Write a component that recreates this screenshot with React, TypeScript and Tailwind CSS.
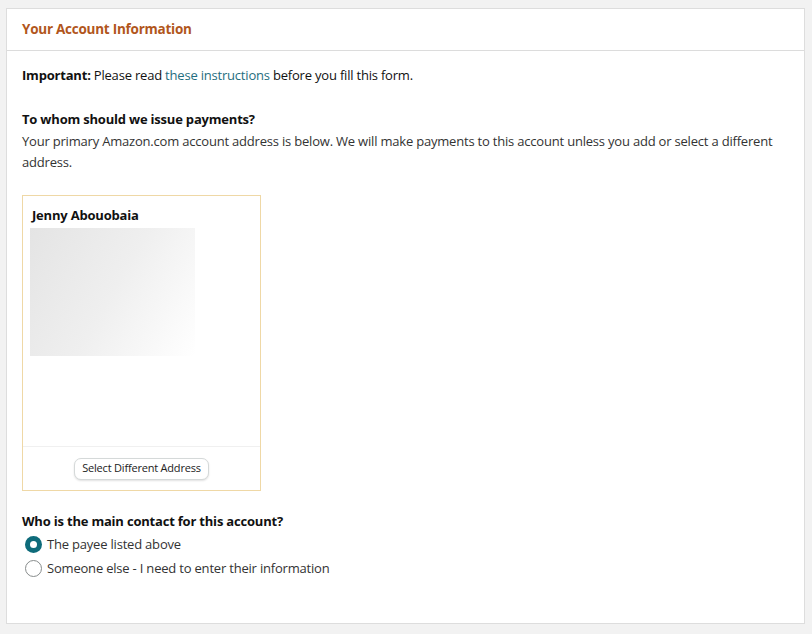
import React, { useState } from 'react';

const App: React.FC = () => {
  const [contact, setContact] = useState<'payee' | 'other'>('payee');

  return (
    <div className="min-h-[634px] w-full bg-[#f2f2f2] pt-2 pl-[6px] pr-[7px] text-[13px] tracking-[-0.2px] text-[#111] font-['Open_Sans','Noto_Sans',sans-serif]">
      <div className="h-[616px] border border-[#dddddd] bg-white">
        {/* header */}
        <div className="h-[42px] border-b border-[#dcdcdc] flex items-center px-[15px]">
          <h2 className="text-[13.5px] tracking-[-0.25px] font-bold text-[#b1561c] -mt-[1px]">Your Account Information</h2>
        </div>

        <div className="px-[15px] pt-[14px]">
          <p className="leading-[20px]">
            <span className="font-bold">Important:</span> Please read{' '}
            <a href="#" className="text-[#1f6e80]">these instructions</a> before you fill this form.
          </p>

          <h3 className="mt-[24px] font-bold leading-[20px]">To whom should we issue payments?</h3>
          <p className="mt-[2px] leading-[21px] text-[#333]">
            Your primary Amazon.com account address is below. We will make payments to this account unless you add or select a different address.
          </p>

          {/* address card */}
          <div className="mt-[22px] w-[239px] h-[296px] border border-[#efd8a6] flex flex-col">
            <div className="flex-1 px-[9px] pt-[11px]">
              <div className="font-bold leading-[16px]">Jenny Abouobaia</div>
              <div className="mt-[5px] -ml-[2px] w-[165px] h-[128px] bg-[linear-gradient(120deg,#e4e4e4_0%,#efefef_50%,#ffffff_100%)]" />
            </div>
            <div className="h-[44px] border-t border-[#f0f0f0] flex items-center justify-center">
              <button className="h-[22px] px-[7px] rounded-[7px] border border-[#d5d9d9] bg-white text-[11px] text-[#222] shadow-[0_1px_2px_rgba(0,0,0,0.12)]">
                Select Different Address
              </button>
            </div>
          </div>

          <h3 className="mt-[21px] font-bold leading-[18px]">Who is the main contact for this account?</h3>
          <div className="mt-[5px] ml-[3px] flex flex-col gap-[6px]">
            <label className="flex items-center gap-[5px] cursor-pointer" onClick={() => setContact('payee')}>
              {contact === 'payee' ? (
                <span className="w-[17px] h-[17px] rounded-full bg-[#0e6b7a] flex items-center justify-center">
                  <span className="w-[7px] h-[7px] rounded-full bg-white" />
                </span>
              ) : (
                <span className="w-[17px] h-[17px] rounded-full border border-[#888c8c] bg-white" />
              )}
              <span className="text-[#333] leading-[18px]">The payee listed above</span>
            </label>
            <label className="flex items-center gap-[5px] cursor-pointer" onClick={() => setContact('other')}>
              {contact === 'other' ? (
                <span className="w-[17px] h-[17px] rounded-full bg-[#0e6b7a] flex items-center justify-center">
                  <span className="w-[7px] h-[7px] rounded-full bg-white" />
                </span>
              ) : (
                <span className="w-[17px] h-[17px] rounded-full border border-[#888c8c] bg-white" />
              )}
              <span className="text-[#333] leading-[18px]">Someone else - I need to enter their information</span>
            </label>
          </div>
        </div>
      </div>
    </div>
  );
};

export default App;
